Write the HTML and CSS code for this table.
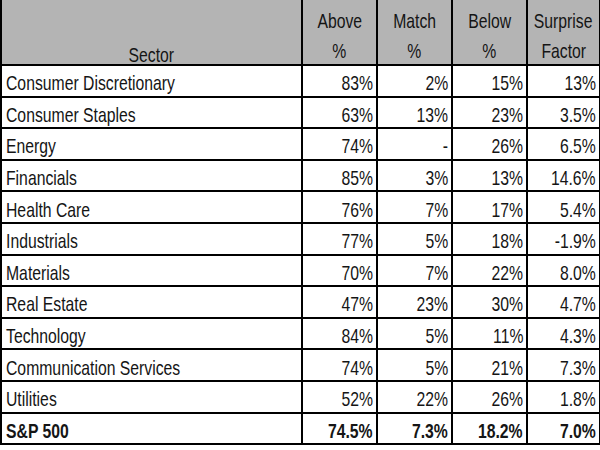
FILE: index.html
```html
<!DOCTYPE html>
<html>
<head>
<meta charset="utf-8">
<link rel="stylesheet" href="styles.css">
</head>
<body>
<table class="grid">
  <colgroup>
    <col class="c-sector"><col class="c-num"><col class="c-num"><col class="c-num"><col class="c-last">
  </colgroup>
  <thead>
    <tr class="head">
      <th class="sector-h"><span class="sx">Sector</span></th>
      <th><span class="sx">Above</span><br><span class="sx">%</span></th>
      <th><span class="sx">Match</span><br><span class="sx">%</span></th>
      <th><span class="sx">Below</span><br><span class="sx">%</span></th>
      <th><span class="sx">Surprise</span><br><span class="sx">Factor</span></th>
    </tr>
  </thead>
  <tbody>
    <tr><td class="name"><span class="sx">Consumer Discretionary</span></td><td><span class="sx">83%</span></td><td><span class="sx">2%</span></td><td><span class="sx">15%</span></td><td><span class="sx">13%</span></td></tr>
    <tr><td class="name"><span class="sx">Consumer Staples</span></td><td><span class="sx">63%</span></td><td><span class="sx">13%</span></td><td><span class="sx">23%</span></td><td><span class="sx">3.5%</span></td></tr>
    <tr><td class="name"><span class="sx">Energy</span></td><td><span class="sx">74%</span></td><td><span class="sx">-</span></td><td><span class="sx">26%</span></td><td><span class="sx">6.5%</span></td></tr>
    <tr><td class="name"><span class="sx">Financials</span></td><td><span class="sx">85%</span></td><td><span class="sx">3%</span></td><td><span class="sx">13%</span></td><td><span class="sx">14.6%</span></td></tr>
    <tr><td class="name"><span class="sx">Health Care</span></td><td><span class="sx">76%</span></td><td><span class="sx">7%</span></td><td><span class="sx">17%</span></td><td><span class="sx">5.4%</span></td></tr>
    <tr><td class="name"><span class="sx">Industrials</span></td><td><span class="sx">77%</span></td><td><span class="sx">5%</span></td><td><span class="sx">18%</span></td><td><span class="sx">-1.9%</span></td></tr>
    <tr><td class="name"><span class="sx">Materials</span></td><td><span class="sx">70%</span></td><td><span class="sx">7%</span></td><td><span class="sx">22%</span></td><td><span class="sx">8.0%</span></td></tr>
    <tr><td class="name"><span class="sx">Real Estate</span></td><td><span class="sx">47%</span></td><td><span class="sx">23%</span></td><td><span class="sx">30%</span></td><td><span class="sx">4.7%</span></td></tr>
    <tr><td class="name"><span class="sx">Technology</span></td><td><span class="sx">84%</span></td><td><span class="sx">5%</span></td><td><span class="sx">11%</span></td><td><span class="sx">4.3%</span></td></tr>
    <tr><td class="name"><span class="sx">Communication Services</span></td><td><span class="sx">74%</span></td><td><span class="sx">5%</span></td><td><span class="sx">21%</span></td><td><span class="sx">7.3%</span></td></tr>
    <tr><td class="name"><span class="sx">Utilities</span></td><td><span class="sx">52%</span></td><td><span class="sx">22%</span></td><td><span class="sx">26%</span></td><td><span class="sx">1.8%</span></td></tr>
    <tr class="total"><td class="name"><span class="sx">S&amp;P 500</span></td><td><span class="sx">74.5%</span></td><td><span class="sx">7.3%</span></td><td><span class="sx">18.2%</span></td><td><span class="sx">7.0%</span></td></tr>
  </tbody>
</table>
</body>
</html>
```
FILE: styles.css
```css
html, body {
  margin: 0;
  padding: 0;
  background: #ffffff;
}
.grid {
  border-collapse: collapse;
  table-layout: fixed;
  width: 599px;
  font-family: "Liberation Sans", Arial, sans-serif;
  font-size: 21px;
  color: #151515;
}
.c-sector { width: 301px; }
.c-num { width: 75px; }
.c-last { width: 73px; }
.grid th, .grid td {
  border: 2px solid #000000;
  padding: 0 3px 0 4px;
  white-space: nowrap;
  overflow: hidden;
}
.grid tr:first-child th { border-top: none; }
.sx {
  display: inline-block;
  transform: scaleX(0.75);
}
.head th {
  background: #b4b4b4;
  font-weight: normal;
  text-align: center;
  vertical-align: bottom;
  height: 64px;
  line-height: 30px;
  padding: 0;
}
.head th .sx {
  transform-origin: center;
  transform: translateY(2px) scaleX(0.75);
  margin: 0 -20px;
}
.head th.sector-h {
  line-height: 25px;
}
.head th.sector-h .sx {
  transform: translateY(3px) scaleX(0.75);
}
.grid td {
  height: 29.6px;
  text-align: right;
  line-height: 23px;
  vertical-align: middle;
}
.grid td .sx {
  transform-origin: right center;
  transform: translateY(2px) scaleX(0.75);
}
.grid td.name {
  text-align: left;
}
.grid td.name .sx {
  transform-origin: left center;
}
.total td {
  font-weight: bold;
}
```
